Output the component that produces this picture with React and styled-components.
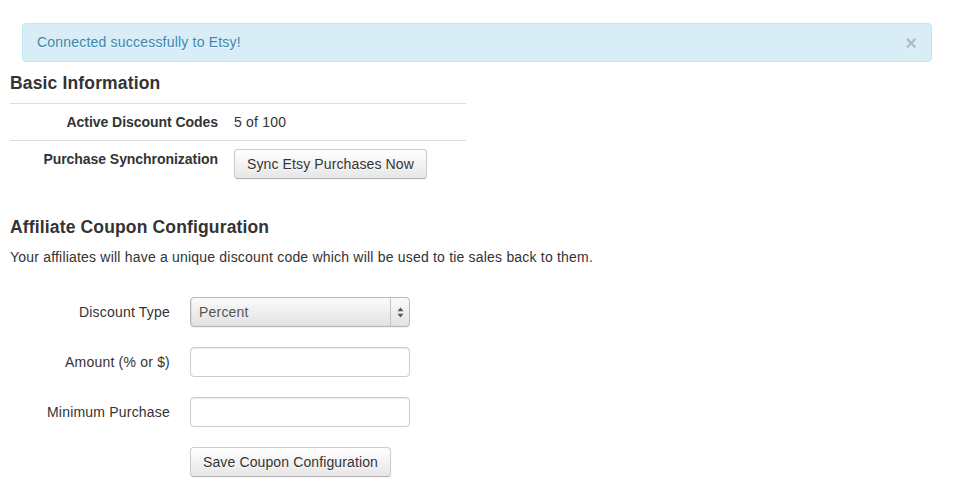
import { useState } from 'react';
import styled, { createGlobalStyle } from 'styled-components';

const GlobalStyle = createGlobalStyle`
  body {
    margin: 0;
    background: #fff;
    font-family: "Liberation Sans", Arial, Helvetica, sans-serif;
    font-size: 14px;
    line-height: 20px;
    letter-spacing: 0.2px;
    color: #333;
  }
`;

const App = () => {
  const [showAlert, setShowAlert] = useState(true);
  const [coupon, setCoupon] = useState({
    discount_type: 'percent',
    amount: '',
    minimum: '',
  });
  const handleChange = (e) => {
    const { name, value } = e.target;
    setCoupon({ ...coupon, [name]: value });
  };

  return (
    <Page>
      <GlobalStyle />
      {showAlert && (
        <Alert>
          <span>Connected successfully to Etsy!</span>
          <CloseButton onClick={() => setShowAlert(false)}>×</CloseButton>
        </Alert>
      )}
      <Heading>Basic Information</Heading>
      <InfoTable>
        <tbody>
          <tr>
            <InfoHead>Active Discount Codes</InfoHead>
            <InfoCell>5 of 100</InfoCell>
          </tr>
          <tr>
            <InfoHead>Purchase Synchronization</InfoHead>
            <InfoCell>
              <Button type="button">Sync Etsy Purchases Now</Button>
            </InfoCell>
          </tr>
        </tbody>
      </InfoTable>

      <Heading>Affiliate Coupon Configuration</Heading>
      <Lead>
        Your affiliates will have a unique discount code which will be used to
        tie sales back to them.
      </Lead>

      <HorizontalForm onSubmit={(e) => e.preventDefault()}>
        <ControlGroup>
          <ControlLabel htmlFor="discount_type">Discount Type</ControlLabel>
          <SelectWrap>
            <Select
              id="discount_type"
              name="discount_type"
              value={coupon.discount_type}
              onChange={handleChange}
            >
              <option value="percent">Percent</option>
              <option value="fixed">Fixed Amount</option>
            </Select>
            <SelectArrows>
              <svg width="7" height="11" viewBox="0 0 7 11">
                <path d="M3.5 0.5 L6.5 4.2 L0.5 4.2 Z" fill="#555" />
                <path d="M3.5 10.5 L6.5 6.8 L0.5 6.8 Z" fill="#555" />
              </svg>
            </SelectArrows>
          </SelectWrap>
        </ControlGroup>
        <ControlGroup>
          <ControlLabel htmlFor="amount">Amount (% or $)</ControlLabel>
          <TextInput
            id="amount"
            name="amount"
            value={coupon.amount}
            onChange={handleChange}
          />
        </ControlGroup>
        <ControlGroup>
          <ControlLabel htmlFor="minimum">Minimum Purchase</ControlLabel>
          <TextInput
            id="minimum"
            name="minimum"
            value={coupon.minimum}
            onChange={handleChange}
          />
        </ControlGroup>
        <ControlGroup>
          <ControlLabel as="span" />
          <Button type="submit">Save Coupon Configuration</Button>
        </ControlGroup>
      </HorizontalForm>
    </Page>
  );
};

export default App;

const Page = styled.div`
  padding: 23px 10px 0 10px;
`;

const Alert = styled.div`
  display: flex;
  align-items: flex-start;
  justify-content: space-between;
  margin: 0 13px 11px 12px;
  padding: 8px 35px 8px 14px;
  background-color: #d9edf7;
  border: 1px solid #bce8f1;
  border-radius: 4px;
  color: #3a87ad;
  text-shadow: 0 1px 0 rgba(255, 255, 255, 0.5);
`;

const CloseButton = styled.button`
  margin: 1px -21px 0 0;
  padding: 0;
  border: 0;
  background: transparent;
  cursor: pointer;
  font-family: "Liberation Sans", Arial, sans-serif;
  font-size: 20px;
  font-weight: bold;
  line-height: 20px;
  color: #000;
  opacity: 0.2;
  text-shadow: 0 1px 0 #fff;
`;

const Heading = styled.h4`
  margin: 0 0 10px;
  font-size: 17.5px;
  font-weight: bold;
  line-height: 20px;
  letter-spacing: 0.15px;
  color: #333;
`;

const InfoTable = styled.table`
  width: 456px;
  margin-bottom: 30px;
  border-collapse: collapse;
  border-spacing: 0;
`;

const InfoHead = styled.th`
  width: 200px;
  padding: 8px;
  text-align: right;
  vertical-align: top;
  font-weight: bold;
  line-height: 20px;
  letter-spacing: -0.05px;
  border-top: 1px solid #ddd;
`;

const InfoCell = styled.td`
  padding: 8px;
  text-align: left;
  vertical-align: top;
  line-height: 20px;
  border-top: 1px solid #ddd;
`;

const Lead = styled.p`
  margin: 0 0 30px;
`;

const HorizontalForm = styled.form`
  margin: 0;
`;

const ControlGroup = styled.div`
  display: flex;
  align-items: flex-start;
  margin-bottom: 20px;
`;

const ControlLabel = styled.label`
  width: 160px;
  margin-right: 20px;
  padding-top: 5px;
  text-align: right;
  flex-shrink: 0;
`;

const Button = styled.button`
  display: inline-block;
  padding: 4px 12px;
  font-family: "Liberation Sans", Arial, sans-serif;
  font-size: 14px;
  line-height: 20px;
  letter-spacing: 0.12px;
  color: #333;
  text-align: center;
  text-shadow: 0 1px 1px rgba(255, 255, 255, 0.75);
  background-color: #f5f5f5;
  background-image: linear-gradient(to bottom, #ffffff, #e6e6e6);
  border: 1px solid #cccccc;
  border-bottom-color: #b3b3b3;
  border-radius: 4px;
  box-shadow: inset 0 1px 0 rgba(255, 255, 255, 0.2),
    0 1px 2px rgba(0, 0, 0, 0.05);
  cursor: pointer;
`;

const SelectWrap = styled.div`
  position: relative;
  width: 220px;
  height: 30px;
`;

const Select = styled.select`
  appearance: none;
  box-sizing: border-box;
  width: 220px;
  height: 30px;
  margin: 0;
  padding: 0 30px 0 8px;
  font-family: "Liberation Sans", Arial, sans-serif;
  font-size: 14px;
  letter-spacing: 0.2px;
  color: #555;
  background-image: linear-gradient(to bottom, #fbfbfb, #ececec 60%, #e2e2e2);
  border: 1px solid #b8b8b8;
  border-radius: 4px;
  box-shadow: inset 1px 0 1px rgba(0, 0, 0, 0.08), 0 1px 1px rgba(0, 0, 0, 0.06);
  outline: none;
`;

const SelectArrows = styled.span`
  position: absolute;
  top: 1px;
  right: 1px;
  bottom: 1px;
  width: 18px;
  display: flex;
  align-items: center;
  justify-content: center;
  border-left: 1px solid #c4c4c4;
  pointer-events: none;
`;

const TextInput = styled.input`
  box-sizing: border-box;
  width: 220px;
  height: 30px;
  padding: 4px 6px;
  font-family: "Liberation Sans", Arial, sans-serif;
  font-size: 14px;
  color: #555;
  background-color: #fff;
  border: 1px solid #ccc;
  border-radius: 4px;
  box-shadow: inset 0 1px 1px rgba(0, 0, 0, 0.075);
  outline: none;
`;
